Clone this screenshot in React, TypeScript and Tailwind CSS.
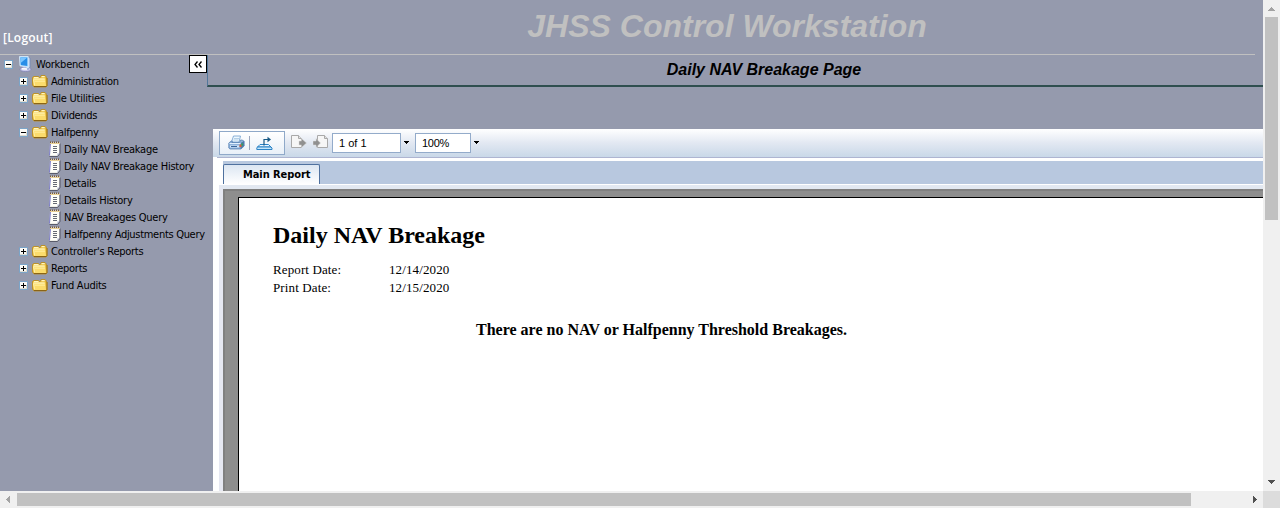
import React from "react";

function Toggle({ open }: { open: boolean }) {
  return (
    <svg className="mt-px h-[9px] w-[9px] shrink-0" viewBox="0 0 9 9" shapeRendering="crispEdges">
      <rect width="9" height="9" fill="#7ba4c8" />
      <rect x="1" y="1" width="7" height="7" fill="#fbfaf6" />
      <path d="M1 7.500h7M7.500 4v4" stroke="#dedbd0" />
      <path d="M2 4.500h5" stroke="#000" />
      {!open && <path d="M4.500 2v5" stroke="#000" />}
    </svg>
  );
}

function Folder() {
  return (
    <svg className="h-4 w-4 shrink-0" viewBox="0 0 16 16">
      <path d="M.5 12V4.500l1-1h5l1 1.200L9 3.500V2.500h4l1 1v1l1 .5v8l-1 1H2z" fill="#e9bd3c" stroke="#b98a1c" strokeWidth=".8" />
      <path d="M2 4h4.500v1H2zM9.500 3h3.200v1.200H9.500z" fill="#fff6c0" />
      <path d="M1 5.500h12l1 7.500H2.500z" fill="#fbdc6c" />
      <path d="M1.500 6h11.200" stroke="#fffbd0" />
      <path d="M1.500 6.500l1 6" stroke="#fff3b0" />
      <path d="M2.200 7.500h10.800v1.500H2.500z" fill="#ffe98f" />
      <path d="M2 13.500h12.500" stroke="#8b6414" />
      <path d="M15 5v8" stroke="#9b7420" />
    </svg>
  );
}

function Note() {
  return (
    <svg className="-ml-px h-4 w-[13px] shrink-0" viewBox="0 0 13 16">
      <path d="M2 1.500h9.500V12L9.500 15H1.500z" fill="#fffff8" />
      <path d="M2.500 2L1.500 14.500" stroke="#7a7ac8" />
      <path d="M1.500 15.400h8l2.500-3V2.500" fill="none" stroke="#4c4d5a" strokeWidth=".9" />
      <path d="M2 1.500h10" stroke="#7b5a34" strokeWidth="2" strokeDasharray="1 1" />
      <path d="M2 2.500h10" stroke="#e9cf94" />
      <path d="M5 5.500h4M5 7.500h4M5 9.500h4M5 11.500h4" stroke="#666a74" />
      <path d="M9 14.500l.5-2.200H11.500z" fill="#c4cae4" />
    </svg>
  );
}

function Computer() {
  return (
    <svg className="h-4 w-4 shrink-0" viewBox="0 0 16 16">
      <ellipse cx="7.500" cy="13.200" rx="5.500" ry="2.400" fill="#c9c9ea" stroke="#7376ad" strokeWidth=".6" />
      <path d="M9.500 1l2.500 1v9l-2 2.500-2-2z" fill="#c4d6ee" stroke="#6785bd" strokeWidth=".6" />
      <path d="M1.500.5h8.700v10.800L2 9.800z" fill="#a9dafc" stroke="#dceeff" strokeWidth=".8" />
      <path d="M2.500 1.500h6.800v8.600L2.800 8.900z" fill="#278de8" />
      <path d="M2.500 1.500h6.800L2.700 7z" fill="#7cc6ff" />
      <path d="M4 12.800l5 .2" stroke="#fff" strokeWidth="1.400" />
    </svg>
  );
}

type RowData = { label: string; kind: "root" | "folder" | "note"; open?: boolean; cls: string };
const rows: RowData[] = [
  { label: "Workbench", kind: "root", open: true, cls: "tracking-[-0.22px]" },
  { label: "Administration", kind: "folder", cls: "tracking-[-0.34px]" },
  { label: "File Utilities", kind: "folder", cls: "tracking-[-0.22px]" },
  { label: "Dividends", kind: "folder", cls: "tracking-[-0.33px]" },
  { label: "Halfpenny", kind: "folder", open: true, cls: "tracking-[-0.33px]" },
  { label: "Daily NAV Breakage", kind: "note", cls: "tracking-[-0.25px]" },
  { label: "Daily NAV Breakage History", kind: "note", cls: "tracking-[-0.25px]" },
  { label: "Details", kind: "note", cls: "tracking-[-0.3px]" },
  { label: "Details History", kind: "note", cls: "tracking-[-0.28px]" },
  { label: "NAV Breakages Query", kind: "note", cls: "tracking-[-0.26px]" },
  { label: "Halfpenny Adjustments Query", kind: "note", cls: "tracking-[-0.3px]" },
  { label: "Controller's Reports", kind: "folder", cls: "tracking-[-0.26px]" },
  { label: "Reports", kind: "folder", cls: "tracking-[-0.24px]" },
  { label: "Fund Audits", kind: "folder", cls: "tracking-[-0.24px]" },
];

function TreeRow({ label, kind, open = false, cls }: RowData) {
  const pad = kind === "root" ? "pl-1" : kind === "folder" ? "pl-[19px]" : "pl-[49px]";
  return (
    <div className={`flex h-[17px] items-center whitespace-nowrap ${pad}`}>
      {kind !== "note" && <Toggle open={open} />}
      {kind === "root" && <span className="ml-[5px] flex"><Computer /></span>}
      {kind === "folder" && <span className="ml-1 flex"><Folder /></span>}
      {kind === "note" && <Note />}
      <span className={`${kind === "folder" ? "ml-[3px]" : kind === "root" ? "ml-[2px]" : "ml-[3px]"} ${cls} pt-px`}>{label}</span>
    </div>
  );
}

function Printer() {
  return (
    <svg className="h-4 w-[17px]" viewBox="0 0 17 16">
      <path d="M5.500 1h7l-1.500 6H3.500z" fill="#eef8ff" stroke="#6f9dcb" strokeWidth=".8" />
      <path d="M6 3.500h5M5.500 5h5" stroke="#b3cfe5" />
      <path d="M.8 8l2.500-2h1L4 7.500h7.500l1-2.500h1.500l2.200 1.200V11l-3.200 3H2L.8 13z" fill="#8fb3db" stroke="#4c79ae" strokeWidth=".7" />
      <path d="M12.500 8l3.500-2V11l-3.500 3z" fill="#5079a8" />
      <path d="M1.500 8.500h11" stroke="#e2f0fd" />
      <path d="M2 10.500h9v2H2z" fill="#d7e9fa" />
      <path d="M3 11.500h6" stroke="#3b669a" />
      <path d="M11.500 9.500h2V12h-2z" fill="#de5f32" /><path d="M13.500 8.500H15v2h-1.500z" fill="#2daa50" />
    </svg>
  );
}

function Export() {
  return (
    <svg className="h-[15px] w-[17px]" viewBox="0 0 17 15" fill="none" stroke="#2b83c6">
      <path d="M4 8.500h8.500l2.500 2.500H1.500z" fill="#eef7ff" />
      <path d="M1.500 11h13.500l1 1v1.500H.8V12z" fill="#c6e6fb" strokeLinejoin="round" />
      <path d="M8 9.500V3.500h4" stroke="#175884" strokeWidth="1.200" />
      <path d="M11.500.8L15 3.500l-3.500 2.700z" fill="#175884" stroke="none" />
    </svg>
  );
}

function PageIcon({ flip = false }: { flip?: boolean }) {
  const page = flip ? "M4.500.5h7l3 3v9h-10z" : "M.500.5h7l3 3v9H.5z";
  const fold = flip ? "M11.500.5v3h3" : "M7.500.5v3h3";
  const arrow = flip ? "M0 6h3V3.500L7.500 8 3 12.500V10H0z" : "M8 6h2.500V3.500L15.500 8l-5 4.500V10H8z";
  return (
    <svg className="h-[14px] w-4" viewBox="0 0 16 14">
      <path d={page} fill="#f6f6f6" stroke="#a9a9a9" />
      <path d={fold} fill="#e2e2e2" stroke="#a9a9a9" />
      <path d={arrow} fill="#909090" stroke="#d8d8d8" strokeWidth=".5" />
    </svg>
  );
}

const Caret = () => (
  <svg className="h-[3px] w-[5px]" viewBox="0 0 5 3" shapeRendering="crispEdges"><path d="M0 0h5L2.500 3z" /></svg>
);

function Toolbar() {
  return (
    <div className="flex h-7 items-start bg-linear-to-b from-white via-[#e2e8f2] to-[#c9d8e8] pl-[6px] pt-[2px]">
      <div className="flex h-6 w-[66px] items-center border border-[#8fa9c9] bg-linear-to-b from-white to-[#e9f0f8] pl-2">
        <Printer />
        <span className="ml-[4px] h-[14px] w-px bg-[#9aa5bd]" />
        <span className="ml-[6px] flex"><Export /></span>
      </div>
      <span className="ml-[6px] mt-1"><PageIcon /></span>
      <span className="ml-[6px] mt-1"><PageIcon flip /></span>
      <div className="ml-[3px] mt-[2px] flex h-5 w-[69px] items-center border border-[#93abca] bg-white pl-[6px]">1 of 1</div>
      <span className="ml-[3px] mt-[10px] flex"><Caret /></span>
      <div className="ml-[6px] mt-[2px] flex h-5 w-[56px] items-center border border-[#93abca] bg-white pl-[6px] tracking-[-0.3px]">100%</div>
      <span className="ml-[3px] mt-[10px] flex"><Caret /></span>
    </div>
  );
}

export default function App() {
  return (
    <div className="flex h-[508px] w-[1280px] flex-col overflow-hidden bg-[#959aad] font-['Liberation_Sans',sans-serif] text-[11px] leading-none text-black">
      <div className="flex h-[491px]">
        <div className="flex w-[1263px] flex-col">
          <header className="mr-2 flex h-[55px] border-b border-[#c0c0c0]">
            <div className="w-[199px] pl-[3px] pt-[31px] font-['Open_Sans','Noto_Sans',sans-serif] text-[12px] font-semibold leading-[14px] tracking-[0.2px] text-white">[Logout]</div>
            <h1 className="flex-1 pt-[8px] text-center text-[32px] font-bold italic leading-9 text-[#c0c0c0]">JHSS Control Workstation</h1>
          </header>
          <div className="flex flex-1">
            <nav className="flex w-[207px] items-start font-['DejaVu_Sans_Condensed','DejaVu_Sans',sans-serif] text-[11px] [font-stretch:condensed]">
              <div className="w-[189px]">
                {rows.map((r) => <TreeRow key={r.label} {...r} />)}
              </div>
              <button className="flex h-[18px] w-[18px] items-center justify-center border border-black bg-white">
                <svg className="h-[7px] w-2" viewBox="0 0 8 7" fill="none" stroke="#000" strokeWidth="1.300"><path d="M3.500.5l-2.500 3 2.500 3M7.500.5L5 3.500l2.500 3" /></svg>
              </button>
            </nav>
            <main className="flex w-[1056px] flex-col">
              <h2 className="h-8 border-b-2 border-l border-b-[#2f4f4f] border-l-[#52779b] pl-[57px] pt-[6px] text-center text-[16px] font-bold italic leading-[18px]">Daily NAV Breakage Page</h2>
              <section className="ml-[6px] mt-[42px] flex h-[362px] flex-col bg-white">
                <Toolbar />
                <div className="ml-1 h-px bg-[#aeb5d1]" />
                <div className="ml-[10px] mt-[3px] flex h-[23px] bg-[#b8c8df] pt-[3px]">
                  <div className="flex h-5 w-[97px] items-center rounded-t-[2px] border border-b-0 border-[#4f719f] bg-linear-to-b from-[#dce6f2] to-white pl-[19px] font-['DejaVu_Sans_Condensed'] font-bold tracking-[-0.08px]">Main Report</div>
                </div>
                <div className="ml-[6px] mt-px flex-1 border-l-4 border-t-4 border-l-[#e6e8f2] border-t-[#e2e8f1]">
                  <div className="h-full border-l-2 border-t-2 border-[#808080] bg-[#8e8e8e] pl-[13px] pt-[6px]">
                    <article className="h-full border-l border-t border-black bg-white pl-[34px] pt-[23px] font-['Liberation_Serif',serif] text-[13px]">
                      <h3 className="text-[24px] font-bold leading-7">Daily NAV Breakage</h3>
                      <dl className="mt-[12px] grid grid-cols-[116px_1fr] leading-[18px] tracking-[0.12px]">
                        <dt>Report Date:</dt><dd>12/14/2020</dd>
                        <dt>Print Date:</dt><dd>12/15/2020</dd>
                      </dl>
                      <p className="ml-[203px] mt-[24px] text-[16px] font-bold leading-[18px]">There are no NAV or Halfpenny Threshold Breakages.</p>
                    </article>
                  </div>
                </div>
              </section>
            </main>
          </div>
        </div>
        <div className="flex w-[17px] flex-col items-center bg-[#f0f0f0]">
          <svg className="mt-[7px] h-1 w-[7px]" viewBox="0 0 7 4" shapeRendering="crispEdges"><path d="M0 4L3.500 0 7 4z" fill="#a3a3a3" /></svg>
          <div className="mt-[6px] h-[203px] w-[13px] bg-[#c1c1c1]" />
          <svg className="mb-[7px] mt-auto h-1 w-[7px]" viewBox="0 0 7 4" shapeRendering="crispEdges"><path d="M0 0L3.500 4 7 0z" fill="#505050" /></svg>
        </div>
      </div>
      <div className="flex h-[17px] items-center bg-[#f0f0f0] pl-[6px]">
        <svg className="h-[7px] w-1" viewBox="0 0 4 7" shapeRendering="crispEdges"><path d="M4 0L0 3.500 4 7z" fill="#a3a3a3" /></svg>
        <div className="ml-[7px] h-[13px] w-[1174px] bg-[#c1c1c1]" />
        <svg className="ml-auto mr-[6px] h-[7px] w-1" viewBox="0 0 4 7" shapeRendering="crispEdges"><path d="M0 0l4 3.500L0 7z" fill="#505050" /></svg>
        <div className="h-full w-[17px] bg-[#dcdcdc]" />
      </div>
    </div>
  );
}
